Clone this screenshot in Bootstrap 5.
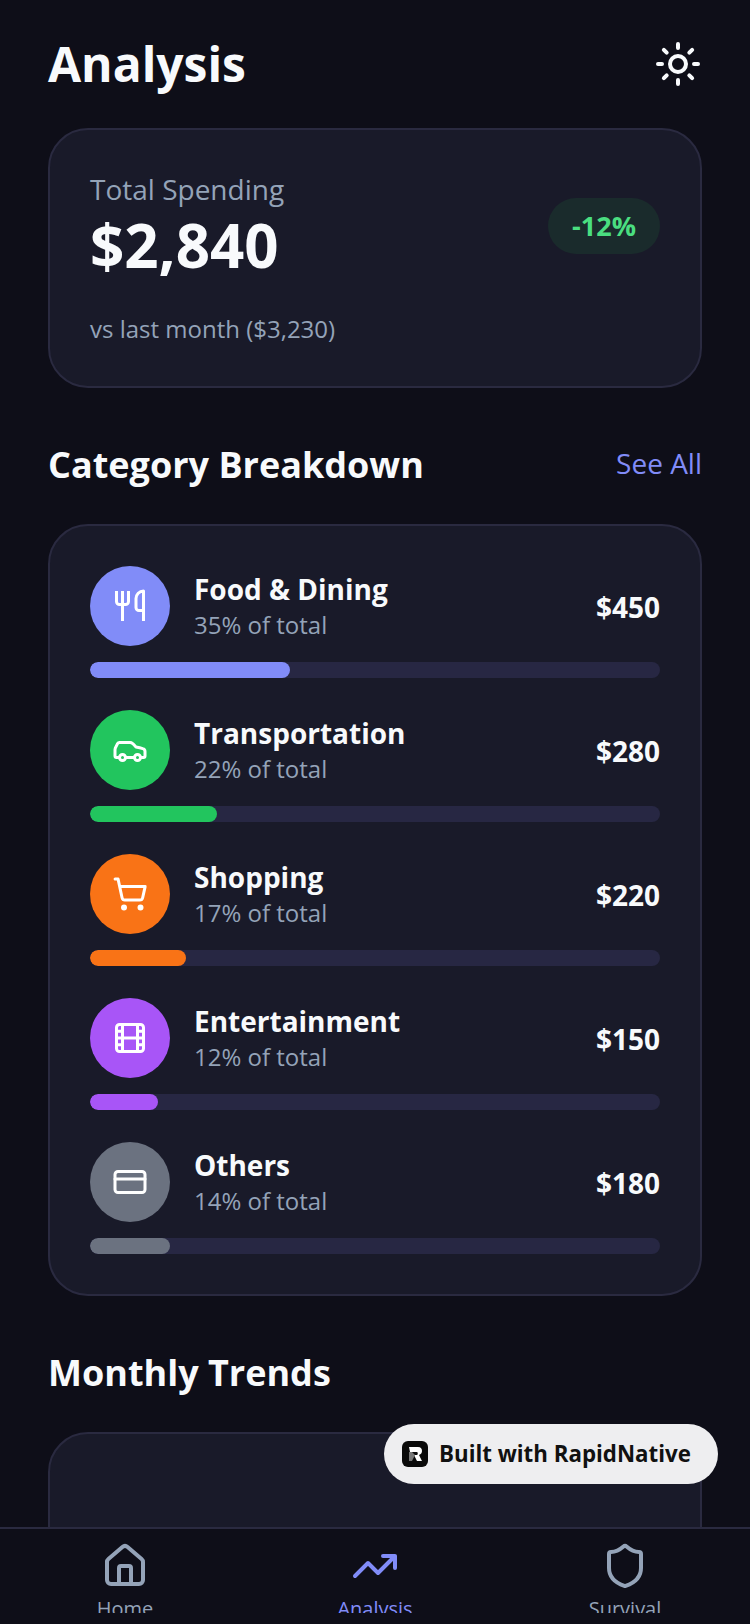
<!DOCTYPE html>
<html lang="en"><head><meta charset="utf-8"><title>Analysis</title>
<link href="https://cdn.jsdelivr.net/npm/bootstrap@5.3.0/dist/css/bootstrap.min.css" rel="stylesheet">
<style>
html,body{height:100%;margin:0}
body{background:#0f0f1a;font-family:"Open Sans","Liberation Sans",sans-serif;color:#f8fafc}
.phone{width:750px;height:1624px;overflow:hidden;position:relative;background:#0e0e18}
.scroller{height:1527px;overflow:hidden;padding:0 48px}
.hdr{height:128px}
.hdr h1{font-size:48px;font-weight:700;line-height:64px;margin:0;color:#f8fafc}
.panel{background:#191a29;border:2px solid #2a2a40;border-radius:40px;padding:40px}
.total{height:260px}
.lbl{font-size:28px;line-height:38px;color:#94a3b8}
.big{font-size:60px;font-weight:700;line-height:74px;color:#f8fafc}
.cmp{font-size:24px;line-height:32px;color:#94a3b8;margin-top:31px}
.pct{background:#1a2b2c;color:#4ade80;font-size:27px;font-weight:700;border-radius:28px;padding:12px 24px;line-height:32px;margin-top:28px}
.sec{margin-top:49px;height:56px;margin-bottom:31px}
.sec h2{font-size:36px;font-weight:700;line-height:56px;margin:0;color:#f8fafc}
.seeall{font-size:28px;color:#818cf8;padding-bottom:4px}
.catrow{margin-bottom:32px}
.catrow:last-child{margin-bottom:0}
.disc{width:80px;height:80px;border-radius:50%;flex:none;margin-right:24px}
.nm{font-size:28px;font-weight:700;line-height:38px;color:#f8fafc}
.sb{font-size:24px;line-height:34px;color:#94a3b8}
.amt{font-size:28px;font-weight:700;color:#f8fafc;padding-top:2px}
.trk{height:16px;border-radius:8px;background:#272743;margin-top:16px;overflow:hidden}
.fil{height:100%;border-radius:8px}
.ic{fill:none;stroke:#fff;stroke-width:2;stroke-linecap:round;stroke-linejoin:round;flex:none}
.tabbar{position:absolute;left:0;right:0;top:1527px;height:86px;border-top:2px solid #2a2a40;background:#0e0e18;overflow:hidden}
.tabi{width:250px;padding-top:13px}
.tabi span{font-size:20px;line-height:28px;color:#94a3b8;margin-top:5px;flex:none}
.tabi.on span{color:#818cf8}
.built{position:absolute;left:384px;top:1424px;width:334px;height:60px;border-radius:30px;background:#eeeef0;display:flex;align-items:center;padding-left:18px;color:#111;font-weight:700;font-size:22.3px}
.logo{width:26px;height:26px;border-radius:6px;background:#0a0a0a;margin-right:11px;flex:none}
</style></head><body>
<div class="phone">
<div class="scroller">
<div class="hdr d-flex justify-content-between align-items-center">
<h1>Analysis</h1>
<svg width="48" height="48" viewBox="0 0 24 24" class="ic" style="stroke:#f8fafc"><circle cx="12" cy="12" r="4"/><path d="M12 2v2M12 20v2M4.930 4.930l1.410 1.410M17.660 17.660l1.410 1.410M2 12h2M20 12h2M6.340 17.660l-1.410 1.410M19.070 4.930l-1.410 1.410"/></svg>
</div>
<div class="panel total d-flex justify-content-between align-items-start">
<div><div class="lbl">Total Spending</div><div class="big">$2,840</div><div class="cmp">vs last month ($3,230)</div></div>
<div class="pct">-12%</div>
</div>
<div class="sec d-flex justify-content-between align-items-center"><h2>Category Breakdown</h2><span class="seeall">See All</span></div>
<div class="panel">
<div class="catrow"><div class="d-flex align-items-center"><div class="disc d-flex align-items-center justify-content-center" style="background:#818cf8"><svg width="36" height="36" viewBox="0 0 24 24" class="ic" style="stroke-linecap:butt"><path d="M3 2v7c0 1.100.9 2 2 2h4a2 2 0 0 0 2-2V2M7 2v20M21 15V2a5 5 0 0 0-5 5v6c0 1.100.9 2 2 2h3zm0 0v7"/></svg></div><div class="flex-grow-1"><div class="nm">Food &amp; Dining</div><div class="sb">35% of total</div></div><div class="amt">$450</div></div><div class="trk"><div class="fil" style="width:35%;background:#818cf8"></div></div></div>
<div class="catrow"><div class="d-flex align-items-center"><div class="disc d-flex align-items-center justify-content-center" style="background:#22c55e"><svg width="36" height="36" viewBox="0 0 24 24" class="ic"><path d="M19 17h2c.6 0 1-.4 1-1v-3c0-.9-.7-1.700-1.500-1.900C18.700 10.600 16 10 16 10s-1.300-1.400-2.200-2.300c-.5-.4-1.100-.7-1.800-.7H5c-.6 0-1.100.4-1.400.9l-1.400 2.900A3.700 3.700 0 0 0 2 12v4c0 .6.4 1 1 1h2M9 17h6"/><circle cx="7" cy="17" r="2"/><circle cx="17" cy="17" r="2"/></svg></div><div class="flex-grow-1"><div class="nm">Transportation</div><div class="sb">22% of total</div></div><div class="amt">$280</div></div><div class="trk"><div class="fil" style="width:22.2%;background:#22c55e"></div></div></div>
<div class="catrow"><div class="d-flex align-items-center"><div class="disc d-flex align-items-center justify-content-center" style="background:#f97316"><svg width="36" height="36" viewBox="0 0 24 24" class="ic"><circle cx="8" cy="21" r="1"/><circle cx="19" cy="21" r="1"/><path d="M2.050 2.050h2l2.660 12.420a2 2 0 0 0 2 1.580h9.780a2 2 0 0 0 1.950-1.570l1.650-7.430H5.120"/></svg></div><div class="flex-grow-1"><div class="nm">Shopping</div><div class="sb">17% of total</div></div><div class="amt">$220</div></div><div class="trk"><div class="fil" style="width:16.8%;background:#f97316"></div></div></div>
<div class="catrow"><div class="d-flex align-items-center"><div class="disc d-flex align-items-center justify-content-center" style="background:#a855f7"><svg width="36" height="36" viewBox="0 0 24 24" class="ic"><rect x="3" y="3" width="18" height="18" rx="2"/><path d="M7 3v18M3 7.500h4M3 12h18M3 16.500h4M17 3v18M17 7.500h4M17 16.500h4"/></svg></div><div class="flex-grow-1"><div class="nm">Entertainment</div><div class="sb">12% of total</div></div><div class="amt">$150</div></div><div class="trk"><div class="fil" style="width:12%;background:#a855f7"></div></div></div>
<div class="catrow"><div class="d-flex align-items-center"><div class="disc d-flex align-items-center justify-content-center" style="background:#6b7280"><svg width="36" height="36" viewBox="0 0 24 24" class="ic"><rect x="2" y="5" width="20" height="14" rx="2"/><path d="M2 10h20"/></svg></div><div class="flex-grow-1"><div class="nm">Others</div><div class="sb">14% of total</div></div><div class="amt">$180</div></div><div class="trk"><div class="fil" style="width:14%;background:#6b7280"></div></div></div>
</div>
<div class="sec d-flex align-items-center"><h2>Monthly Trends</h2></div>
<div class="panel" style="height:300px"></div>
</div>
<div class="built"><svg class="logo" viewBox="0 0 26 26"><path d="M7 6h9c3 0 4 2 4 4s-1 3-3 4l3 6h-5l-3-6h3c1 0 1-3 0-3H8z" fill="#fff"/><path d="M7 11h3l3 3-3 6H7z" fill="#777"/></svg>Built with RapidNative</div>
<div class="tabbar d-flex">
<div class="tabi d-flex flex-column align-items-center"><svg width="48" height="48" viewBox="0 0 24 24" class="ic" style="stroke:#94a3b8"><path d="M15 21v-8a1 1 0 0 0-1-1h-4a1 1 0 0 0-1 1v8"/><path d="M3 10a2 2 0 0 1 .709-1.528l7-5.999a2 2 0 0 1 2.582 0l7 5.999A2 2 0 0 1 21 10v9a2 2 0 0 1-2 2H5a2 2 0 0 1-2-2z"/></svg><span>Home</span></div>
<div class="tabi on d-flex flex-column align-items-center"><svg width="48" height="48" viewBox="0 0 24 24" class="ic" style="stroke:#818cf8"><path d="M22 7 13.500 15.500 8.500 10.500 2 17M16 7h6v6"/></svg><span>Analysis</span></div>
<div class="tabi d-flex flex-column align-items-center"><svg width="48" height="48" viewBox="0 0 24 24" class="ic" style="stroke:#94a3b8"><path d="M20 13c0 5-3.500 7.500-7.660 8.950a1 1 0 0 1-.67-.01C7.500 20.500 4 18 4 13V6a1 1 0 0 1 1-1c2 0 4.500-1.200 6.240-2.720a1.170 1.170 0 0 1 1.520 0C14.510 3.810 17 5 19 5a1 1 0 0 1 1 1z"/></svg><span>Survival</span></div>
</div>
</div>
<script src="https://cdn.jsdelivr.net/npm/bootstrap@5.3.0/dist/js/bootstrap.bundle.min.js"></script>
</body></html>
